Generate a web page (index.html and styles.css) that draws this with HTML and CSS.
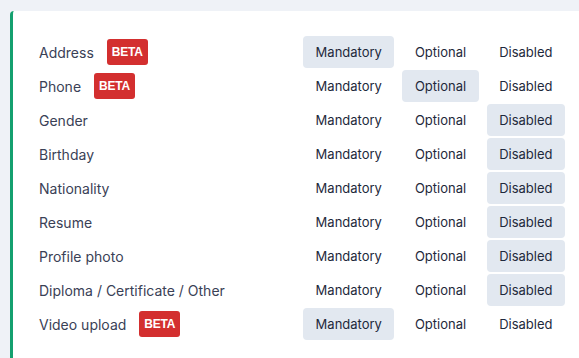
FILE: index.html
```html
<!DOCTYPE html>
<html>
<head>
<meta charset="utf-8">
<link rel="stylesheet" href="styles.css">
</head>
<body>
<div class="card">
  <div class="row"><div class="label">Address <span class="beta">BETA</span></div><div class="opts"><span class="opt on">Mandatory</span><span class="opt">Optional</span><span class="opt">Disabled</span></div></div>
  <div class="row"><div class="label">Phone <span class="beta">BETA</span></div><div class="opts"><span class="opt">Mandatory</span><span class="opt on">Optional</span><span class="opt">Disabled</span></div></div>
  <div class="row"><div class="label">Gender</div><div class="opts"><span class="opt">Mandatory</span><span class="opt">Optional</span><span class="opt on">Disabled</span></div></div>
  <div class="row"><div class="label">Birthday</div><div class="opts"><span class="opt">Mandatory</span><span class="opt">Optional</span><span class="opt on">Disabled</span></div></div>
  <div class="row"><div class="label">Nationality</div><div class="opts"><span class="opt">Mandatory</span><span class="opt">Optional</span><span class="opt on">Disabled</span></div></div>
  <div class="row"><div class="label">Resume</div><div class="opts"><span class="opt">Mandatory</span><span class="opt">Optional</span><span class="opt on">Disabled</span></div></div>
  <div class="row"><div class="label">Profile photo</div><div class="opts"><span class="opt">Mandatory</span><span class="opt">Optional</span><span class="opt on">Disabled</span></div></div>
  <div class="row"><div class="label">Diploma / Certificate / Other</div><div class="opts"><span class="opt">Mandatory</span><span class="opt">Optional</span><span class="opt on">Disabled</span></div></div>
  <div class="row"><div class="label">Video upload <span class="beta">BETA</span></div><div class="opts"><span class="opt on">Mandatory</span><span class="opt">Optional</span><span class="opt">Disabled</span></div></div>
</div>
</body>
</html>
```
FILE: styles.css
```css
html, body { margin: 0; padding: 0; }
body {
  background: #eff2f7;
  font-family: Inter, "Noto Sans", sans-serif;
  padding: 11px 0 0 10px;
  height: 358px;
  box-sizing: border-box;
  overflow: hidden;
  display: flex;
  flex-direction: column;
}
.card {
  flex: 1;
  background: #ffffff;
  border-left: 3px solid #14a06f;
  border-top-left-radius: 4px;
  padding: 25px 14px 0 26px;
  display: flex;
  flex-direction: column;
  gap: 2px;
}
.row {
  display: flex;
  align-items: center;
  justify-content: space-between;
  height: 32px;
}
.label {
  font-size: 14px;
  color: #3a4156;
  display: flex;
  align-items: center;
  gap: 13px;
}
.beta {
  background: #d32f2f;
  color: #fff;
  font-family: "Liberation Sans", Arial, sans-serif;
  font-weight: bold;
  font-size: 12px;
  height: 26px;
  width: 41px;
  border-radius: 3px;
  display: inline-flex;
  align-items: center;
  justify-content: center;
  letter-spacing: -0.2px;
}
.opts {
  display: flex;
  gap: 8px;
}
.opt {
  font-size: 13px;
  color: #1e293b;
  height: 32px;
  padding: 0 12.5px;
  display: inline-flex;
  align-items: center;
  border-radius: 4px;
}
.opt.on { background: #e2e8f0; }
```
